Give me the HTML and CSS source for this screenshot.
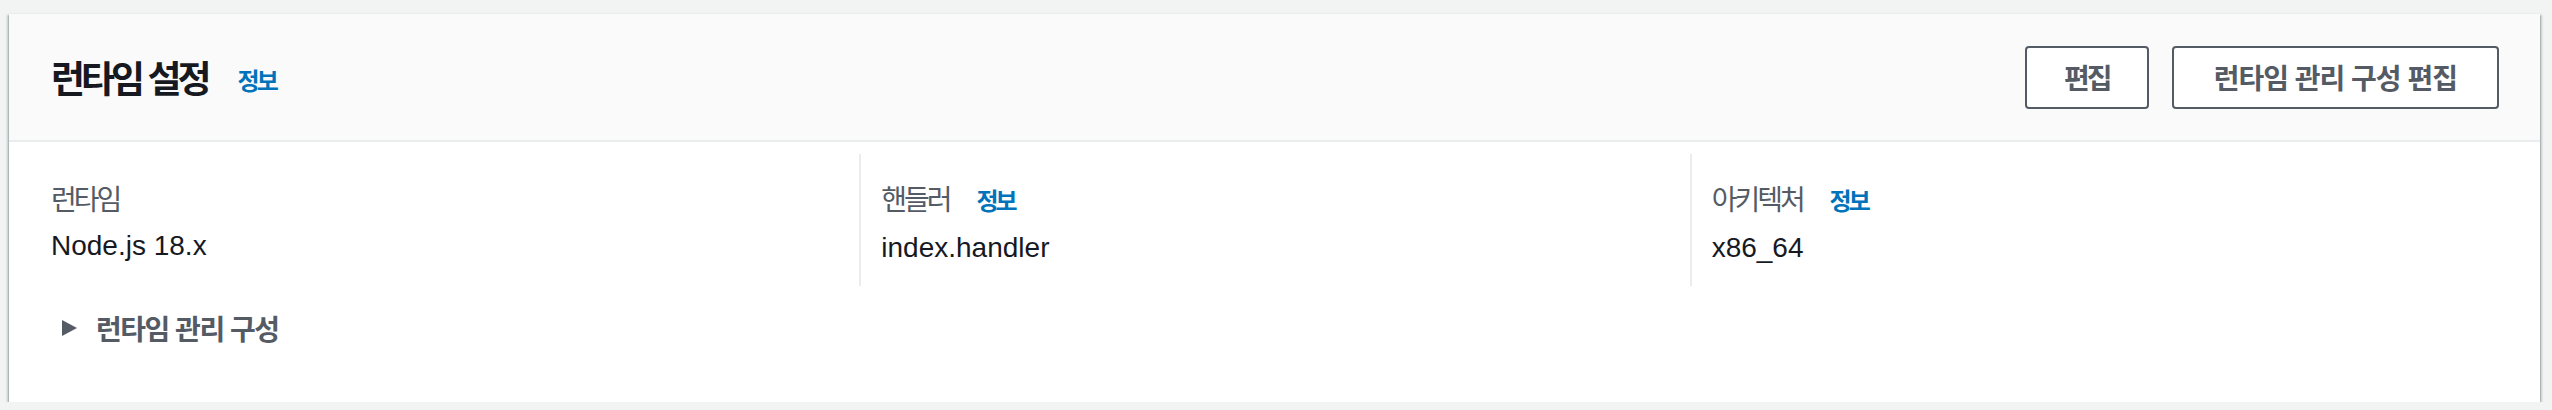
FILE: index.html
```html
<!DOCTYPE html>
<html lang="ko">
<head>
    <meta charset="UTF-8">
    <title>런타임 설정</title>
    <link rel="stylesheet" href="styles.css">
</head>
<body>
    <div class="card">
        <div class="card-header">
            <div class="title-wrap">
                <h2 class="title">런타임 설정</h2>
                <a class="info-link" href="#">정보</a>
            </div>
            <div class="actions">
                <button class="btn btn-small">편집</button>
                <button class="btn">런타임 관리 구성 편집</button>
            </div>
        </div>
        <div class="card-body">
            <div class="columns">
                <div class="col">
                    <div class="label">런타임</div>
                    <div class="value">Node.js 18.x</div>
                </div>
                <div class="col">
                    <div class="label">핸들러 <a class="info-link" href="#">정보</a></div>
                    <div class="value">index.handler</div>
                </div>
                <div class="col">
                    <div class="label">아키텍처 <a class="info-link" href="#">정보</a></div>
                    <div class="value">x86_64</div>
                </div>
            </div>
            <div class="expander">
                <span class="caret"></span>
                <span class="expander-text">런타임 관리 구성</span>
            </div>
        </div>
    </div>
</body>
</html>
```

FILE: styles.css
```css
body {
    margin: 0;
    padding: 13px 0 0 9px;
    background-color: #f2f3f3;
    font-family: "Liberation Sans", "Noto Sans CJK KR", sans-serif;
    color: #16191f;
}
.card {
    width: 2531px;
    height: 389px;
    background: white;
    box-shadow: 0 2px 2px 0 rgba(0, 28, 36, 0.5), 2px 2px 2px 0 rgba(0, 28, 36, 0.15), -2px 2px 2px 0 rgba(0, 28, 36, 0.15);
    border-top: 1px solid #eaeded;
    box-sizing: border-box;
}
.card-header {
    height: 128px;
    box-sizing: border-box;
    background: #fafafa;
    border-bottom: 2px solid #eaeded;
    display: flex;
    align-items: center;
    justify-content: space-between;
    padding: 0 41px 0 42px;
}
.title-wrap {
    display: flex;
    align-items: center;
}
.title {
    margin: 0;
    font-size: 37px;
    font-weight: bold;
    letter-spacing: -4px;
    font-family: "Noto Sans CJK KR", sans-serif;
}
.title-wrap .info-link {
    margin-left: 30px;
    margin-top: 4px;
}
.info-link {
    color: #0073bb;
    font-family: "Noto Sans CJK KR", sans-serif;
    font-size: 24px;
    font-weight: bold;
    letter-spacing: -3px;
    text-decoration: none;
}
.actions {
    display: flex;
    gap: 23px;
}
.btn {
    height: 63px;
    padding: 0 40px;
    background: white;
    border: 2px solid #545b64;
    border-radius: 4px;
    color: #545b64;
    font-family: "Noto Sans CJK KR", sans-serif;
    font-size: 28px;
    font-weight: bold;
    letter-spacing: -1px;
}
.btn-small {
    padding: 0 37px;
    letter-spacing: -3px;
}
.card-body {
    padding: 12px 20px 0 20px;
}
.columns {
    display: grid;
    grid-template-columns: repeat(3, 1fr);
}
.col {
    height: 132px;
    box-sizing: border-box;
    padding: 22px 0 0 20px;
    border-left: 2px solid #eaeded;
}
.col:first-child {
    border-left-color: transparent;
}
.label {
    color: #545b64;
    font-size: 28px;
    line-height: 44px;
    font-family: "Noto Sans CJK KR", sans-serif;
    letter-spacing: -3px;
}
.label .info-link {
    margin-left: 22px;
}
.value {
    font-size: 28px;
    line-height: 44px;
    margin-top: 4px;
}
.expander {
    display: flex;
    align-items: center;
    margin: 20px 0 0 33px;
    color: #545b64;
}
.caret {
    width: 0;
    height: 0;
    border-top: 8px solid transparent;
    border-bottom: 8px solid transparent;
    border-left: 15px solid #545b64;
}
.expander-text {
    margin-left: 19px;
    font-family: "Noto Sans CJK KR", sans-serif;
    font-size: 28px;
    font-weight: bold;
    letter-spacing: -1.5px;
    line-height: 44px;
}
```
